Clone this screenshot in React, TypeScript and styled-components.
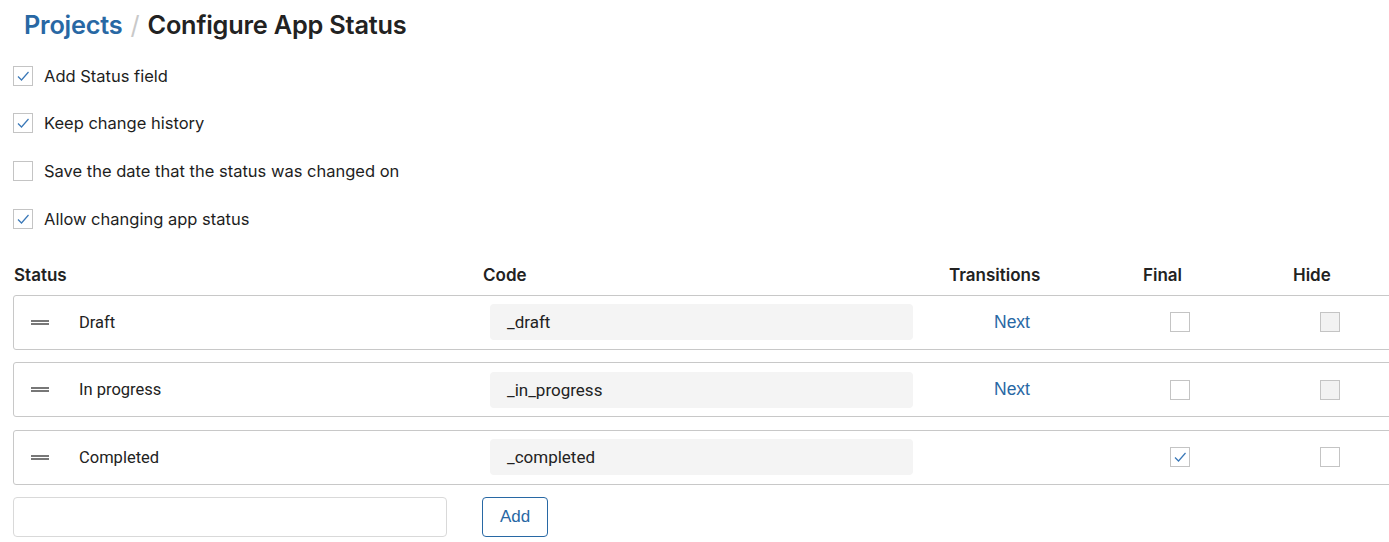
import React from "react";
import styled, { createGlobalStyle } from "styled-components";

const Global = createGlobalStyle`
  html, body { margin: 0; padding: 0; background: #fff; overflow: hidden; }
  body { font-family: Inter, "Noto Sans", sans-serif; color: #222; }
  * { box-sizing: border-box; }
`;

const Page = styled.div`
  width: 1420px;
  padding: 8px 0 0 13px;
`;

const Breadcrumb = styled.h1`
  margin: 0 0 0 11px;
  font-size: 25.3px;
  font-weight: 600;
  line-height: 34px;
  letter-spacing: -0.2px;
  display: flex;
  gap: 8px;
`;

const Crumb = styled.span<{ $link?: boolean }>`
  color: ${(p) => (p.$link ? "#2868a4" : "#222")};
`;

const Slash = styled.span`
  color: #c9c9c9;
  font-weight: 400;
`;

const Options = styled.div`
  display: flex;
  flex-direction: column;
  margin-top: 10px;
`;

const OptionRow = styled.label`
  display: flex;
  align-items: center;
  gap: 11px;
  height: 47.6px;
  font-size: 16.5px;
  color: #1e1e1e;
`;

const Box = styled.span<{ $disabled?: boolean }>`
  width: 20px;
  height: 20px;
  border: 1px solid #c4c4c4;
  background: ${(p) => (p.$disabled ? "#f2f2f2" : "#fff")};
  display: inline-flex;
  align-items: center;
  justify-content: center;
  flex: none;
`;

const Check = ({ checked, disabled }: { checked?: boolean; disabled?: boolean }) => (
  <Box $disabled={disabled}>
    {checked && (
      <svg width="14" height="14" viewBox="0 0 14 14">
        <path d="M2 7.5 L5.5 11 L12.5 3" fill="none" stroke="#3a78b8" strokeWidth="1.2" />
      </svg>
    )}
  </Box>
);

const cols = "469px 466px 194px 150px 1fr";

const HeaderRow = styled.div`
  display: grid;
  grid-template-columns: ${cols};
  margin: 14.6px 0 0 1px;
  height: 36px;
  align-items: center;
  font-size: 17px;
  font-weight: 600;
  color: #222;
`;

const Rows = styled.div`
  display: flex;
  flex-direction: column;
  gap: 12.5px;
  margin-top: 2px;
`;

const Row = styled.div`
  display: grid;
  grid-template-columns: ${cols};
  align-items: center;
  height: 55px;
  border: 1px solid #c8c8c8;
  border-radius: 3px;
`;

const NameCell = styled.div`
  display: flex;
  align-items: center;
  padding-left: 17px;
  font-family: Roboto, "Noto Sans", sans-serif;
  font-size: 16.5px;
  color: #222;
`;

const Handle = styled.span`
  width: 18px;
  height: 1px;
  border-top: 2px solid #777;
  border-bottom: 2px solid #777;
  box-sizing: content-box;
  margin-right: 30px;
`;

const CodeInput = styled.div`
  margin-left: 7px;
  width: 423px;
  height: 36px;
  background: #f4f4f4;
  border-radius: 4px;
  display: flex;
  align-items: center;
  padding-left: 17px;
  font-family: Roboto, "Noto Sans", sans-serif;
  font-size: 17px;
  color: #222;
`;

const LinkCell = styled.div`
  padding-left: 45px;
  font-family: "Liberation Sans", Arial, sans-serif;
  font-size: 17.5px;
  color: #2868a4;
`;

const BoxCell = styled.div<{ $offset: number }>`
  padding-left: ${(p) => p.$offset}px;
  display: flex;
`;

const Footer = styled.div`
  display: flex;
  gap: 35px;
  margin-top: 12.5px;
`;

const TextInput = styled.div`
  width: 434px;
  height: 40px;
  border: 1px solid #d9d9d9;
  border-radius: 4px;
`;

const AddButton = styled.button`
  width: 66px;
  height: 40px;
  border: 1px solid #2868a4;
  border-radius: 4px;
  background: #fff;
  color: #2868a4;
  font-family: "Liberation Sans", Arial, sans-serif;
  font-size: 17px;
  padding: 0;
`;

const statuses = [
  { name: "Draft", code: "_draft", next: true, final: false, hideDisabled: true },
  { name: "In progress", code: "_in_progress", next: true, final: false, hideDisabled: true },
  { name: "Completed", code: "_completed", next: false, final: true, hideDisabled: false },
];

const options = [
  { label: "Add Status field", checked: true },
  { label: "Keep change history", checked: true },
  { label: "Save the date that the status was changed on", checked: false },
  { label: "Allow changing app status", checked: true },
];

export default function App() {
  return (
    <Page>
      <Global />
      <Breadcrumb>
        <Crumb $link>Projects</Crumb>
        <Slash>/</Slash>
        <Crumb>Configure App Status</Crumb>
      </Breadcrumb>
      <Options>
        {options.map((o) => (
          <OptionRow key={o.label}>
            <Check checked={o.checked} />
            {o.label}
          </OptionRow>
        ))}
      </Options>
      <HeaderRow>
        <span>Status</span>
        <span>Code</span>
        <span>Transitions</span>
        <span>Final</span>
        <span>Hide</span>
      </HeaderRow>
      <Rows>
        {statuses.map((s) => (
          <Row key={s.code}>
            <NameCell>
              <Handle />
              {s.name}
            </NameCell>
            <div>
              <CodeInput>{s.code}</CodeInput>
            </div>
            <LinkCell>{s.next ? "Next" : ""}</LinkCell>
            <BoxCell $offset={27}>
              <Check checked={s.final} />
            </BoxCell>
            <BoxCell $offset={27}>
              <Check disabled={s.hideDisabled} />
            </BoxCell>
          </Row>
        ))}
      </Rows>
      <Footer>
        <TextInput />
        <AddButton>Add</AddButton>
      </Footer>
    </Page>
  );
}
